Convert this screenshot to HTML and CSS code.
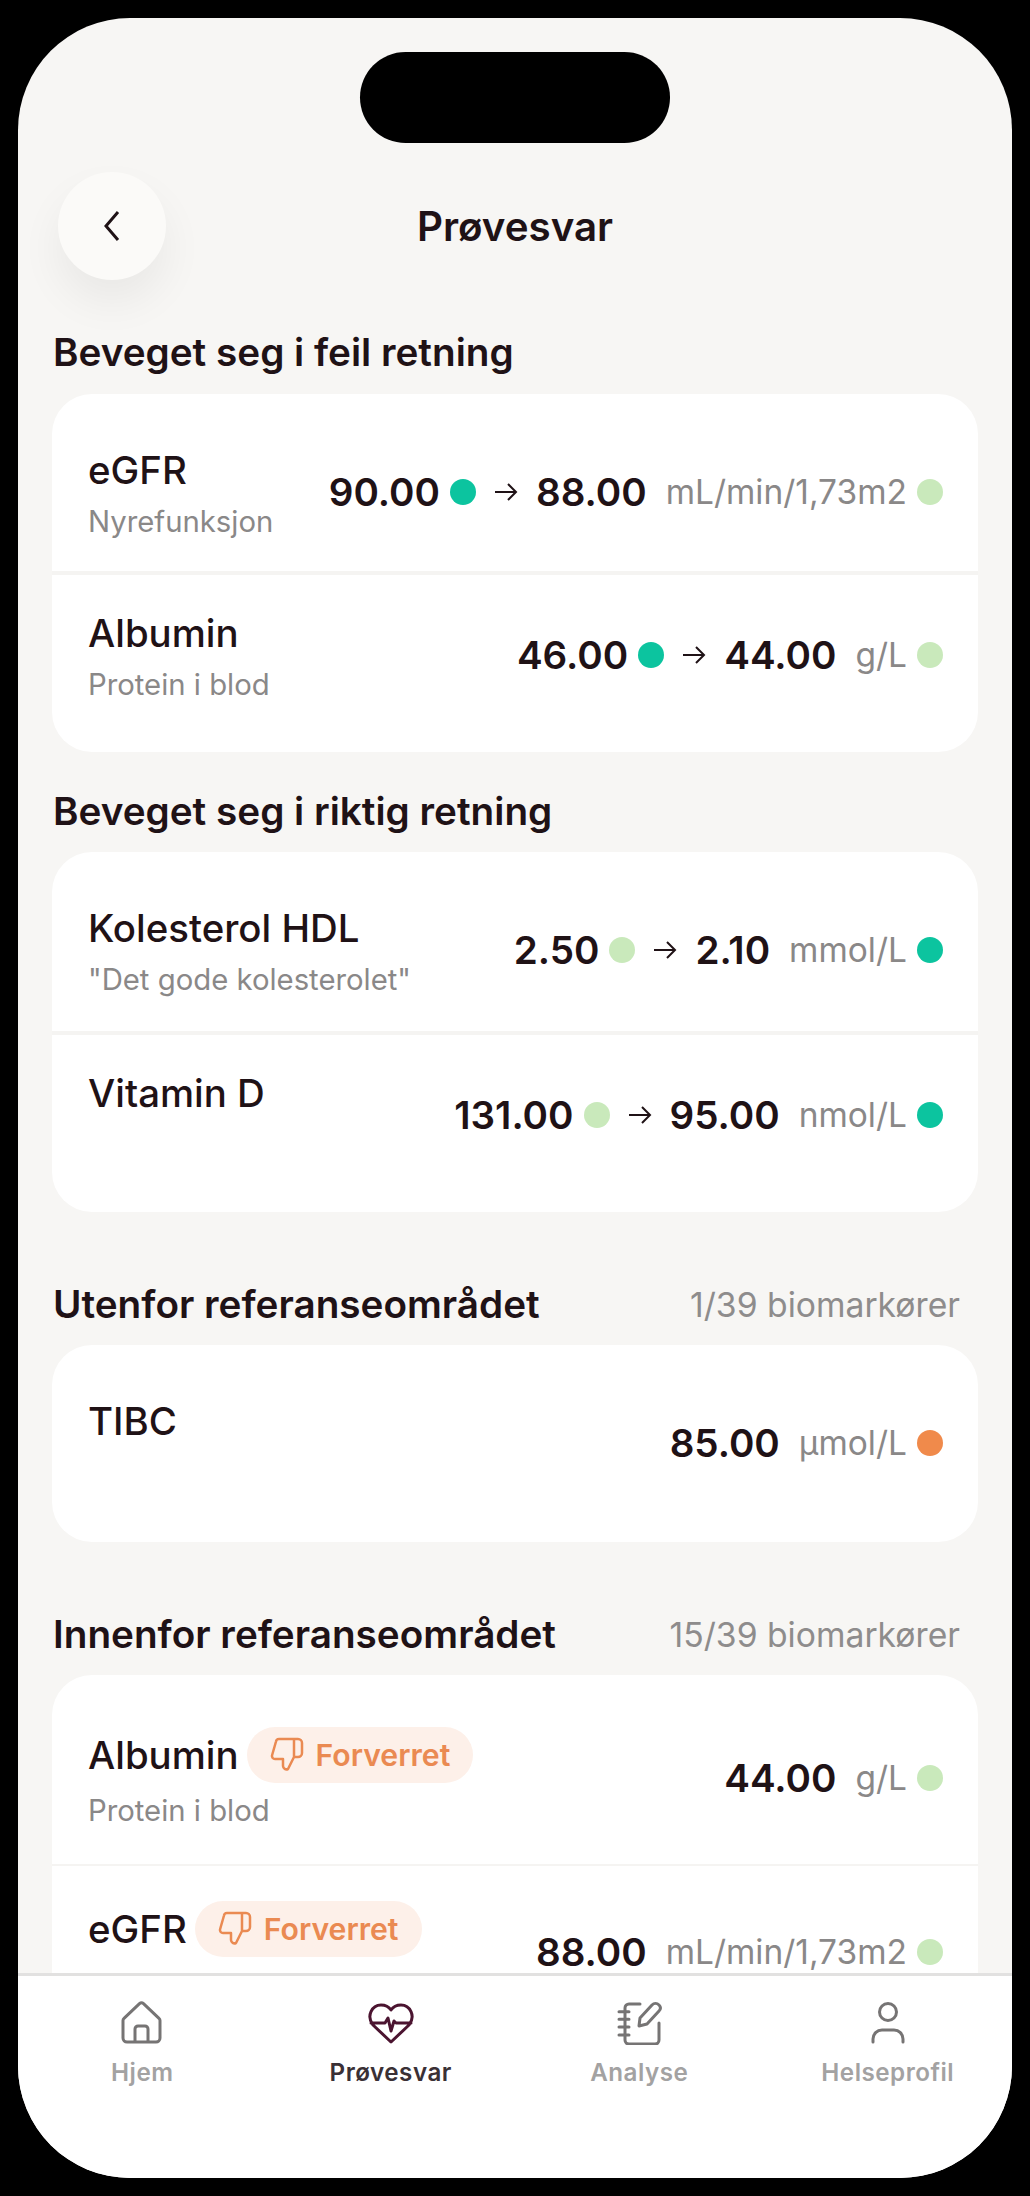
FILE: index.html
```html
<!DOCTYPE html>
<html lang="nb">
<head>
    <meta charset="UTF-8">
    <meta name="viewport" content="width=device-width, initial-scale=1.0">
    <title>Prøvesvar</title>
    <link rel="stylesheet" href="styles.css">
</head>
<body>
    <div class="phone">
        <div class="island"></div>

        <header class="topbar">
            <button class="back" aria-label="Tilbake">
                <svg width="20" height="32" viewBox="0 0 20 32"><path d="M16 2 L4 16 L16 30"/></svg>
            </button>
            <h1>Prøvesvar</h1>
        </header>

        <main class="content">
            <section class="section section-first">
                <div class="section-head"><h2>Beveget seg i feil retning</h2></div>
                <div class="card">
                    <div class="row">
                        <div class="info">
                            <div class="name">eGFR</div>
                            <div class="sub">Nyrefunksjon</div>
                        </div>
                        <div class="values">
                            <span class="num">90.00</span><span class="dot dot-green"></span>
                            <svg class="arrow" width="24" height="20" viewBox="0 0 24 20"><path d="M1 10 H22 M14 2 L22 10 L14 18"/></svg>
                            <span class="num">88.00</span><span class="unit">mL/min/1,73m2</span><span class="dot dot-light"></span>
                        </div>
                    </div>
                    <div class="row">
                        <div class="info">
                            <div class="name">Albumin</div>
                            <div class="sub">Protein i blod</div>
                        </div>
                        <div class="values">
                            <span class="num">46.00</span><span class="dot dot-green"></span>
                            <svg class="arrow" width="24" height="20" viewBox="0 0 24 20"><path d="M1 10 H22 M14 2 L22 10 L14 18"/></svg>
                            <span class="num">44.00</span><span class="unit">g/L</span><span class="dot dot-light"></span>
                        </div>
                    </div>
                </div>
            </section>

            <section class="section">
                <div class="section-head"><h2>Beveget seg i riktig retning</h2></div>
                <div class="card card-tall">
                    <div class="row">
                        <div class="info">
                            <div class="name">Kolesterol HDL</div>
                            <div class="sub">"Det gode kolesterolet"</div>
                        </div>
                        <div class="values">
                            <span class="num">2.50</span><span class="dot dot-light"></span>
                            <svg class="arrow" width="24" height="20" viewBox="0 0 24 20"><path d="M1 10 H22 M14 2 L22 10 L14 18"/></svg>
                            <span class="num">2.10</span><span class="unit">mmol/L</span><span class="dot dot-green"></span>
                        </div>
                    </div>
                    <div class="row">
                        <div class="info">
                            <div class="name">Vitamin D</div>
                        </div>
                        <div class="values">
                            <span class="num">131.00</span><span class="dot dot-light"></span>
                            <svg class="arrow" width="24" height="20" viewBox="0 0 24 20"><path d="M1 10 H22 M14 2 L22 10 L14 18"/></svg>
                            <span class="num">95.00</span><span class="unit">nmol/L</span><span class="dot dot-green"></span>
                        </div>
                    </div>
                </div>
            </section>

            <section class="section section-wide">
                <div class="section-head">
                    <h2>Utenfor referanseområdet</h2>
                    <span class="count">1/39 biomarkører</span>
                </div>
                <div class="card">
                    <div class="row row-single">
                        <div class="info">
                            <div class="name">TIBC</div>
                        </div>
                        <div class="values">
                            <span class="num">85.00</span><span class="unit">µmol/L</span><span class="dot dot-orange"></span>
                        </div>
                    </div>
                </div>
            </section>

            <section class="section section-wide">
                <div class="section-head">
                    <h2>Innenfor referanseområdet</h2>
                    <span class="count">15/39 biomarkører</span>
                </div>
                <div class="card card-tags">
                    <div class="row">
                        <div class="info">
                            <div class="name">Albumin
                                <span class="badge">
                                    <svg width="34" height="36" viewBox="0 0 34 36"><path d="M24 20 L18 32 a3.5 3.5 0 0 1-5-3 V22 H5 a3 3 0 0 1-3-3.5 L6 4.5 A3 3 0 0 1 9 2 H28 a4 4 0 0 1 4 4 V16 a4 4 0 0 1-4 4 Z M24 2 V20"/></svg>
                                    Forverret
                                </span>
                            </div>
                            <div class="sub">Protein i blod</div>
                        </div>
                        <div class="values">
                            <span class="num">44.00</span><span class="unit">g/L</span><span class="dot dot-light"></span>
                        </div>
                    </div>
                    <div class="row">
                        <div class="info">
                            <div class="name">eGFR
                                <span class="badge">
                                    <svg width="34" height="36" viewBox="0 0 34 36"><path d="M24 20 L18 32 a3.5 3.5 0 0 1-5-3 V22 H5 a3 3 0 0 1-3-3.5 L6 4.5 A3 3 0 0 1 9 2 H28 a4 4 0 0 1 4 4 V16 a4 4 0 0 1-4 4 Z M24 2 V20"/></svg>
                                    Forverret
                                </span>
                            </div>
                        </div>
                        <div class="values">
                            <span class="num">88.00</span><span class="unit">mL/min/1,73m2</span><span class="dot dot-light"></span>
                        </div>
                    </div>
                </div>
            </section>
        </main>

        <nav class="tabbar">
            <a class="tab">
                <svg width="44" height="44" viewBox="0 0 44 44"><path d="M3 19.5 a3 3 0 0 1 1-2.2 L19.500 2.600 a3 3 0 0 1 4 0 L39 17.300 a3 3 0 0 1 1 2.200 V37 a4 4 0 0 1-4 4 H7 a4 4 0 0 1-4-4 Z M15 41 V28 a3 3 0 0 1 3-3 h7 a3 3 0 0 1 3 3 V41"/></svg>
                <span>Hjem</span>
            </a>
            <a class="tab tab-active">
                <svg width="48" height="44" viewBox="0 0 48 44"><path d="M24 41 L6 24 C-1 15 5 4 14 4 C18 4 22 6 24 9 C26 6 30 4 34 4 C43 4 49 15 42 24 Z M4 22 H18 L21 17 L24 30 L27 20 L29 22 H44"/></svg>
                <span>Prøvesvar</span>
            </a>
            <a class="tab">
                <svg width="46" height="44" viewBox="0 0 46 44"><path d="M24 3 H13 a4 4 0 0 0-4 4 V39 a4 4 0 0 0 4 4 H39 a4 4 0 0 0 4-4 V22 M3 10.700 H13 M3 18.300 H13 M3 26 H13 M3 34 H13 M23 25 L24 17 L36 4 C38 2 41 2 43 4 C45 6 45 8 43 10 L31 23 Z"/></svg>
                <span>Analyse</span>
            </a>
            <a class="tab">
                <svg width="36" height="44" viewBox="0 0 36 44"><circle cx="18" cy="11" r="8.500"/><path d="M3 41 V38 a9 9 0 0 1 9-9 h12 a9 9 0 0 1 9 9 V41"/></svg>
                <span>Helseprofil</span>
            </a>
        </nav>
    </div>
</body>
</html>
```

FILE: styles.css
```css
* {
    box-sizing: border-box;
}

body {
    margin: 0;
    height: 2196px;
    padding: 18px;
    background-color: #000;
    font-family: Inter, "Liberation Sans", sans-serif;
    color: #1f1216;
}

.phone {
    position: relative;
    height: 2160px;
    display: flex;
    flex-direction: column;
    background-color: #f7f6f4;
    border-radius: 112px;
    overflow: hidden;
}

.island {
    position: absolute;
    top: 34px;
    left: 342px;
    width: 310px;
    height: 91px;
    background-color: #000;
    border-radius: 46px;
}

/* Header */
.topbar {
    position: relative;
    display: flex;
    justify-content: center;
    align-items: center;
    height: 108px;
    margin-top: 154px;
    flex-shrink: 0;
}

.topbar h1 {
    margin: 0;
    font-size: 40.3px;
    font-weight: 600;
}

.back {
    position: absolute;
    left: 40px;
    top: 0;
    width: 108px;
    height: 108px;
    padding: 0;
    border: none;
    border-radius: 50%;
    background-color: #fbfaf8;
    box-shadow: 0 22px 44px rgba(0, 0, 0, 0.06);
}

.back svg {
    display: block;
    margin: 0 auto;
    fill: none;
    stroke: #1f1216;
    stroke-width: 3;
}

/* Lists */
.content {
    flex: 1;
    min-height: 0;
    padding: 50px 34px 0;
    overflow: hidden;
}

.section + .section {
    margin-top: 37px;
}

.section + .section-wide {
    margin-top: 70px;
}

.section-head {
    display: flex;
    justify-content: space-between;
    align-items: center;
    height: 44px;
    margin-bottom: 19px;
    padding: 0 18px 0 1px;
}

.section-first .section-head {
    margin-bottom: 20px;
}

.section-head h2 {
    margin: 0;
    font-size: 38.7px;
    font-weight: 600;
}

.count {
    font-size: 33.7px;
    color: #8e8c8c;
}

.card {
    background-color: #fff;
    border-radius: 40px;
}

.row {
    display: flex;
    justify-content: space-between;
    align-items: flex-start;
    height: 177px;
    padding: 35px 35px 0 36px;
}

.row:first-child {
    height: 181px;
    padding-top: 53px;
    border-bottom: 4px solid #f5f4f2;
}

.card-tall .row:first-child {
    height: 183px;
}

.row-single,
.row-single:first-child {
    height: 197px;
    border-bottom: none;
}

.name {
    display: flex;
    align-items: center;
    gap: 8px;
    min-height: 44px;
    font-size: 38.4px;
    font-weight: 500;
}

.sub {
    margin-top: 11px;
    font-size: 29.3px;
    line-height: 36px;
    color: #8a8888;
}

.values {
    display: flex;
    align-items: center;
    height: 44px;
    margin-top: 23px;
}

.num {
    font-size: 38.6px;
    line-height: 34px;
    font-weight: 600;
}

.unit {
    margin-left: 19px;
    font-size: 33.5px;
    line-height: 34px;
    color: #8a8888;
}

.dot {
    width: 26px;
    height: 26px;
    margin-left: 10px;
    border-radius: 50%;
}

.dot-green {
    background-color: #0cc49f;
}

.dot-light {
    background-color: #c9e9bb;
}

.dot-orange {
    background-color: #f08a4b;
}

.arrow {
    margin: 0 18px 0 18px;
    fill: none;
    stroke: #1f1216;
    stroke-width: 2;
}

/* Rows with a badge */
.card-tags .row:first-child {
    height: 191px;
    padding-top: 52px;
    border-bottom-width: 2px;
}

.card-tags .name {
    min-height: 56px;
}

.card-tags .sub {
    margin-top: 10px;
}

.card-tags .values {
    margin-top: 29px;
}

.badge {
    display: inline-flex;
    align-items: center;
    gap: 12px;
    height: 56px;
    padding: 0 23px;
    border-radius: 28px;
    background-color: #fdf0e9;
    font-size: 30.2px;
    font-weight: 600;
    color: #ea8a52;
}

.badge svg {
    fill: none;
    stroke: #ea8a52;
    stroke-width: 2.5;
    stroke-linejoin: round;
}

/* Bottom navigation */
.tabbar {
    display: grid;
    grid-template-columns: repeat(4, 1fr);
    height: 205px;
    padding-top: 25px;
    flex-shrink: 0;
    background-color: #fff;
    border-top: 3px solid #e2e1e0;
}

.tab {
    display: flex;
    flex-direction: column;
    align-items: center;
    gap: 13px;
    font-size: 24.2px;
    font-weight: 600;
    letter-spacing: 0.5px;
    color: #a3a2a2;
}

.tab svg {
    fill: none;
    stroke: #767474;
    stroke-width: 3;
    stroke-linecap: round;
    stroke-linejoin: round;
}

.tab-active {
    color: #3a3035;
}

.tab-active svg {
    stroke: #4b1430;
}
```
